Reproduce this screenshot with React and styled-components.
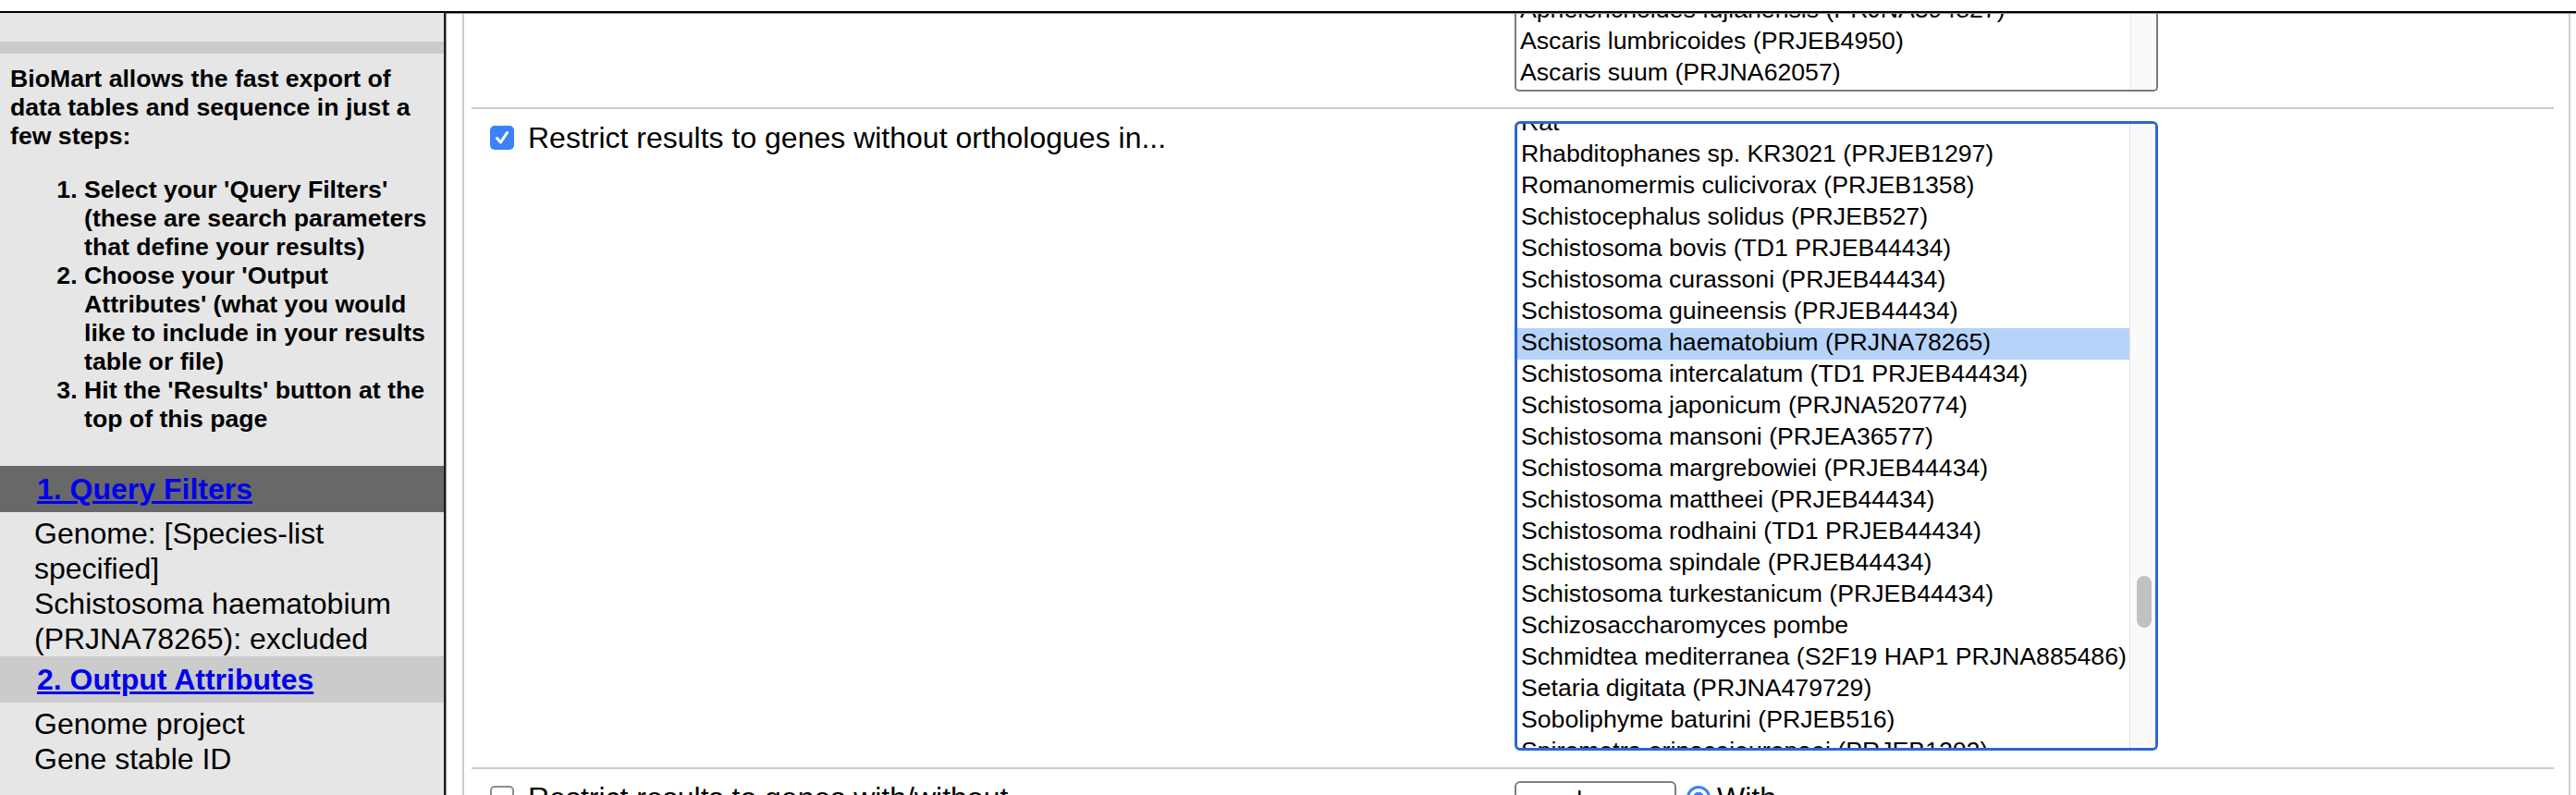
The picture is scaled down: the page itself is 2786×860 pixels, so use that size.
import React from 'react';
import styled, { createGlobalStyle } from 'styled-components';

const Global = createGlobalStyle`
  html, body { margin: 0; padding: 0; overflow: hidden; background: #fff; }
  body { font-family: "Liberation Sans", Arial, Helvetica, sans-serif; color: #000; }
`;

const Page = styled.div`
  width: 2786px;
  height: 860px;
  padding-top: 12px;
  box-sizing: border-box;
  overflow: hidden;
`;

const Frame = styled.div`
  display: flex;
  height: 848px;
  border-top: 2px solid #000;
  box-sizing: border-box;
  overflow: hidden;
`;

/* ---------- Side panel ---------- */
const SidePanel = styled.aside`
  flex: none;
  width: 480px;
  background: #e6e6e6;
  border-right: 2px solid #1c1c1c;
  overflow: hidden;
`;

const SideSpacer = styled.div`
  height: 31px;
`;

const SideBand = styled.div`
  height: 13px;
  background: #cbcbcb;
`;

const Intro = styled.div`
  padding: 12px 10px 0 11px;
  font-weight: bold;
  font-size: 26.67px;
  line-height: 31px;
`;

const IntroText = styled.p`
  margin: 0;
`;

const Steps = styled.ol`
  margin: 27px 0 35px;
  padding-left: 80px;
`;

const SectionBar = styled.div`
  height: 50px;
  display: flex;
  align-items: center;
  padding-left: 40px;
  background: ${(p) => (p.$active ? '#686868' : '#cbcbcb')};
`;

const SectionLink = styled.a`
  color: #0000ee;
  font-weight: bold;
  font-size: 32px;
  text-decoration: underline;
  cursor: pointer;
`;

const SectionBody = styled.div`
  padding: 4px 10px 0 37px;
  font-size: 32px;
  line-height: 38px;
`;

const SummaryLine = styled.div``;

/* ---------- Main ---------- */
const Main = styled.main`
  flex: 1;
  border-top: 1px solid #8f8f8f;
  border-left: 1px solid #8f8f8f;
  padding-left: 17px;
  overflow: hidden;
`;

const Content = styled.div`
  width: 2280px;
  height: 100%;
  box-sizing: border-box;
  border-left: 2px solid #cccccc;
  border-right: 2px solid #cccccc;
  padding: 0 16px 0 8px;
`;

const FilterRow = styled.div`
  display: grid;
  grid-template-columns: 1128px 696px;
  padding: ${(p) => (p.$top ? '0 0 17px' : '13px 0 18px')};
  border-bottom: 2px solid #cccccc;
`;

const LabelCell = styled.label`
  display: flex;
  align-items: flex-start;
  gap: 15px;
  padding-left: 20px;
  font-size: 32px;
  line-height: 37px;
`;

const Checkbox = styled.span`
  flex: none;
  width: 26px;
  height: 26px;
  margin-top: 5px;
  box-sizing: border-box;
  border-radius: 5px;
  display: flex;
  align-items: center;
  justify-content: center;
  background: ${(p) => (p.$checked ? '#3a82f6' : '#fff')};
  border: ${(p) => (p.$checked ? 'none' : '2px solid #8d8d8d')};
`;

const ControlCell = styled.div`
  display: flex;
  align-items: flex-start;
`;

const Listbox = styled.div`
  width: 696px;
  height: ${(p) => p.$height}px;
  box-sizing: border-box;
  display: flex;
  overflow: hidden;
  font-size: 26.67px;
  background: #fff;
  border: ${(p) => (p.$focused ? '3px solid #2c66d2' : '2px solid #7b7b7b')};
  border-radius: ${(p) => (p.$focused ? '6px' : '0 0 5px 5px')};
  ${(p) => (p.$clipTop ? 'border-top: none;' : '')}
`;

const OptionList = styled.div`
  flex: 1;
  display: flex;
  flex-direction: column;
  justify-content: ${(p) => (p.$alignEnd ? 'flex-end' : 'flex-start')};
  overflow: hidden;
`;

const OptionScroll = styled.div`
  margin-top: ${(p) => -p.$offset}px;
`;

const Option = styled.div`
  flex: none;
  height: 34px;
  line-height: 30px;
  padding: 0 4px;
  box-sizing: border-box;
  white-space: nowrap;
  background: ${(p) => (p.$selected ? '#b6d3f9' : 'transparent')};
`;

const ScrollTrack = styled.div`
  flex: none;
  width: 28px;
  box-sizing: border-box;
  background: #fafafa;
  border-left: 1px solid #e3e3e3;
  padding-left: 7px;
`;

const ScrollThumb = styled.div`
  width: 16px;
  height: 56px;
  border-radius: 8px;
  background: #c1c1c1;
  margin-top: ${(p) => p.$offset}px;
`;

const SelectBox = styled.div`
  width: 175px;
  height: 40px;
  box-sizing: border-box;
  border: 2px solid #7f7f7f;
  border-radius: 6px;
  display: flex;
  align-items: flex-start;
  justify-content: space-between;
  padding: 3px 10px 0 12px;
  font-size: 26.67px;
  line-height: 30px;
`;

const ChevronWrap = styled.span`
  padding-top: 12px;
`;

const Radio = styled.span`
  flex: none;
  width: 26px;
  height: 26px;
  margin: 5px 7px 0 11px;
  box-sizing: border-box;
  border-radius: 50%;
  border: 3px solid #3a82f6;
  background: radial-gradient(circle, #3a82f6 0 6px, #fff 6.5px);
`;

const RadioLabel = styled.span`
  font-size: 32px;
  line-height: 37px;
`;

const CheckMark = () => (
  <svg width="18" height="18" viewBox="0 0 18 18" aria-hidden="true">
    <path d="M3.5 9.5 L7.5 14 L14.5 3.5" fill="none" stroke="#fff" strokeWidth="3" strokeLinecap="round" strokeLinejoin="round" />
  </svg>
);

const Chevron = () => (
  <svg width="16" height="10" viewBox="0 0 16 10" aria-hidden="true">
    <path d="M2 2 L8 8 L14 2" fill="none" stroke="#333" strokeWidth="2" />
  </svg>
);

const topOptions = [
  'Aphelenchoides fujianensis (PRJNA394827)',
  'Ascaris lumbricoides (PRJEB4950)',
  'Ascaris suum (PRJNA62057)',
];

const speciesOptions = [
  'Rat',
  'Rhabditophanes sp. KR3021 (PRJEB1297)',
  'Romanomermis culicivorax (PRJEB1358)',
  'Schistocephalus solidus (PRJEB527)',
  'Schistosoma bovis (TD1 PRJEB44434)',
  'Schistosoma curassoni (PRJEB44434)',
  'Schistosoma guineensis (PRJEB44434)',
  'Schistosoma haematobium (PRJNA78265)',
  'Schistosoma intercalatum (TD1 PRJEB44434)',
  'Schistosoma japonicum (PRJNA520774)',
  'Schistosoma mansoni (PRJEA36577)',
  'Schistosoma margrebowiei (PRJEB44434)',
  'Schistosoma mattheei (PRJEB44434)',
  'Schistosoma rodhaini (TD1 PRJEB44434)',
  'Schistosoma spindale (PRJEB44434)',
  'Schistosoma turkestanicum (PRJEB44434)',
  'Schizosaccharomyces pombe',
  'Schmidtea mediterranea (S2F19 HAP1 PRJNA885486)',
  'Setaria digitata (PRJNA479729)',
  'Soboliphyme baturini (PRJEB516)',
  'Spirometra erinaceieuropaei (PRJEB1202)',
];

const selectedSpecies = 'Schistosoma haematobium (PRJNA78265)';

export default function App() {
  return (
    <>
      <Global />
      <Page>
        <Frame>
          <SidePanel>
            <SideSpacer />
            <SideBand />
            <Intro>
              <IntroText>
                BioMart allows the fast export of data tables and sequence in just a few steps:
              </IntroText>
              <Steps>
                <li>Select your 'Query Filters' (these are search parameters that define your results)</li>
                <li>Choose your 'Output Attributes' (what you would like to include in your results table or file)</li>
                <li>Hit the 'Results' button at the top of this page</li>
              </Steps>
            </Intro>
            <SectionBar $active>
              <SectionLink>1. Query Filters</SectionLink>
            </SectionBar>
            <SectionBody>
              <SummaryLine>Genome: [Species-list specified]</SummaryLine>
              <SummaryLine>Schistosoma haematobium (PRJNA78265): excluded</SummaryLine>
            </SectionBody>
            <SectionBar>
              <SectionLink>2. Output Attributes</SectionLink>
            </SectionBar>
            <SectionBody>
              <SummaryLine>Genome project</SummaryLine>
              <SummaryLine>Gene stable ID</SummaryLine>
            </SectionBody>
          </SidePanel>

          <Main>
            <Content>
              <FilterRow $top>
                <div />
                <ControlCell>
                  <Listbox $height={84} $clipTop>
                    <OptionList $alignEnd>
                      {topOptions.map((o) => (
                        <Option key={o}>{o}</Option>
                      ))}
                    </OptionList>
                    <ScrollTrack />
                  </Listbox>
                </ControlCell>
              </FilterRow>

              <FilterRow>
                <LabelCell>
                  <Checkbox $checked>
                    <CheckMark />
                  </Checkbox>
                  <span>Restrict results to genes without orthologues in...</span>
                </LabelCell>
                <ControlCell>
                  <Listbox $height={681} $focused>
                    <OptionList>
                      <OptionScroll $offset={17}>
                        {speciesOptions.map((o) => (
                          <Option key={o} $selected={o === selectedSpecies}>
                            {o}
                          </Option>
                        ))}
                      </OptionScroll>
                    </OptionList>
                    <ScrollTrack>
                      <ScrollThumb $offset={489} />
                    </ScrollTrack>
                  </Listbox>
                </ControlCell>
              </FilterRow>

              <FilterRow>
                <LabelCell>
                  <Checkbox />
                  <span>Restrict results to genes with/without</span>
                </LabelCell>
                <ControlCell>
                  <SelectBox>
                    <span>paralogues</span>
                    <ChevronWrap>
                      <Chevron />
                    </ChevronWrap>
                  </SelectBox>
                  <Radio />
                  <RadioLabel>With</RadioLabel>
                </ControlCell>
              </FilterRow>
            </Content>
          </Main>
        </Frame>
      </Page>
    </>
  );
}
